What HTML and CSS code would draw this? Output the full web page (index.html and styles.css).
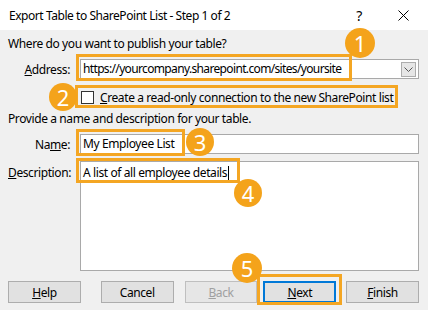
FILE: index.html
```html
<!DOCTYPE html>
<html lang="en">
<head>
    <meta charset="UTF-8">
    <title>Export Table to SharePoint List</title>
    <link rel="stylesheet" href="styles.css">
</head>
<body>

<div class="dialog">
    <!-- Title bar -->
    <div class="titlebar">
        <span class="title">Export Table to SharePoint List - Step 1 of 2</span>
        <span class="help-mark">?</span>
        <svg class="close" width="11" height="11" viewBox="0 0 11 11">
            <path d="M0.5 0.5 L10.5 10.5 M10.5 0.5 L0.5 10.5" stroke="#000" stroke-width="1" fill="none"/>
        </svg>
    </div>

    <div class="content">
        <p class="prompt">Where do you want to publish your table?</p>

        <div class="field">
            <label class="field-label"><u>A</u>ddress:</label>
            <div class="input combo">
                <span class="url">https://yourcompany.sharepoint.com/sites/yoursite</span>
                <span class="drop">
                    <svg width="9" height="5" viewBox="0 0 9 5">
                        <path d="M0.5 0.5 L4.5 4.5 L8.5 0.5" stroke="#555" stroke-width="1" fill="none"/>
                    </svg>
                </span>
            </div>
        </div>

        <div class="check-row">
            <span class="checkbox"></span>
            <span><u>C</u>reate a read-only connection to the new SharePoint list</span>
        </div>

        <p class="prompt prompt-2">Provide a name and description for your table.</p>

        <div class="field">
            <label class="field-label">Na<u>m</u>e:</label>
            <div class="input">My Employee List</div>
        </div>

        <div class="field field-desc">
            <label class="field-label"><u>D</u>escription:</label>
            <div class="input textarea">A list of all employee details<span class="caret"></span></div>
        </div>

        <div class="buttons">
            <button class="btn"><u>H</u>elp</button>
            <button class="btn btn-cancel">Cancel</button>
            <button class="btn btn-back" disabled><u>B</u>ack</button>
            <button class="btn btn-next"><u>N</u>ext</button>
            <button class="btn btn-finish"><u>F</u>inish</button>
        </div>
    </div>

    <!-- Annotations drawn over the dialog -->
    <div class="marks">
        <span class="hl hl-address"></span>
        <span class="hl hl-check"></span>
        <span class="hl hl-name"></span>
        <span class="hl hl-desc"></span>
        <span class="hl hl-next"></span>

        <span class="badge badge-1">1</span>
        <span class="badge badge-2">2</span>
        <span class="badge badge-3">3</span>
        <span class="badge badge-4">4</span>
        <span class="badge badge-5">5</span>
    </div>
</div>

</body>
</html>
```

FILE: styles.css
```css
body {
    margin: 0;
    padding: 0;
    font-family: "Noto Sans", "Open Sans", sans-serif;
    font-size: 12px;
    letter-spacing: -0.4px;
    color: #000;
}
.dialog {
    position: relative;
    width: 428px;
    height: 310px;
    background-color: #f0f0f0;
    overflow: hidden;
}
.titlebar {
    height: 30px;
    background-color: #fff;
    display: flex;
    align-items: center;
    padding-left: 9px;
}
.title {
    flex: 1;
    font-size: 12px;
    letter-spacing: -0.45px;
}
.help-mark {
    font-size: 14px;
    margin-right: 36px;
}
.close {
    margin-right: 19px;
}
.content {
    padding: 6px 9px 0 8px;
}
.prompt {
    margin: 0;
    line-height: 16px;
}
.prompt-2 {
    margin-top: 6px;
}
.field {
    display: flex;
    align-items: center;
    margin-top: 7px;
}
.field-label {
    width: 62px;
    margin-right: 10px;
    text-align: right;
}
.field-desc {
    align-items: flex-start;
}
.field-desc .field-label {
    margin-top: 3px;
}
.input {
    flex: 1;
    height: 20px;
    box-sizing: border-box;
    background-color: #fff;
    border: 1px solid #a9a9a9;
    padding: 0 2px;
    line-height: 18px;
    white-space: nowrap;
}
.combo {
    display: flex;
    justify-content: space-between;
    align-items: center;
}
.url {
    letter-spacing: -0.65px;
}
.drop {
    width: 15px;
    height: 15px;
    box-sizing: border-box;
    border: 1px solid #adadad;
    background-color: #e6e6e6;
    display: flex;
    align-items: center;
    justify-content: center;
}
.textarea {
    height: 110px;
    padding-top: 2px;
}
.caret {
    display: inline-block;
    width: 1px;
    height: 14px;
    background-color: #000;
    vertical-align: -3px;
    margin-left: 1px;
}
.check-row {
    display: flex;
    align-items: center;
    height: 16px;
    margin-top: 10px;
    padding-left: 73px;
}
.checkbox {
    width: 13px;
    height: 13px;
    box-sizing: border-box;
    background-color: #fff;
    border: 1px solid #333;
    margin-right: 6px;
}
.buttons {
    display: flex;
    margin-top: 10px;
}
.btn {
    width: 73px;
    height: 22px;
    box-sizing: border-box;
    padding: 0;
    background-color: #e1e1e1;
    border: 1px solid #adadad;
    font-family: inherit;
    font-size: 12px;
    letter-spacing: -0.4px;
    color: #000;
}
.btn-cancel {
    margin-left: 20px;
}
.btn-back {
    margin-left: 11px;
    color: #a0a0a0;
    border-color: #bfbfbf;
    background-color: #e6e6e6;
}
.btn-next {
    margin-left: 6px;
    border: 2px solid #0078d7;
}
.btn-finish {
    margin-left: 10px;
}

/* annotations */
.marks {
    position: absolute;
    inset: 0;
    pointer-events: none;
}
.hl {
    position: absolute;
    box-sizing: border-box;
    border: 3px solid #f4a623;
}
.hl-address { left: 76px; top: 54px; width: 276px; height: 27px; }
.hl-check   { left: 75px; top: 85px; width: 323px; height: 23px; }
.hl-name    { left: 76px; top: 129px; width: 109px; height: 27px; }
.hl-desc    { left: 76px; top: 158px; width: 164px; height: 25px; }
.hl-next    { left: 257px; top: 274px; width: 85px; height: 31px; }

.badge {
    position: absolute;
    width: 28px;
    height: 28px;
    border-radius: 50%;
    background-color: #f4a31b;
    color: #fff;
    font-size: 22px;
    letter-spacing: 0;
    line-height: 28px;
    text-align: center;
}
.badge-1 { left: 345px; top: 28px; width: 30px; height: 30px; line-height: 30px; }
.badge-2 { left: 49px; top: 83px; }
.badge-3 { left: 186px; top: 128px; }
.badge-4 { left: 234px; top: 179px; }
.badge-5 { left: 232px; top: 253px; width: 30px; height: 30px; line-height: 30px; }
```
